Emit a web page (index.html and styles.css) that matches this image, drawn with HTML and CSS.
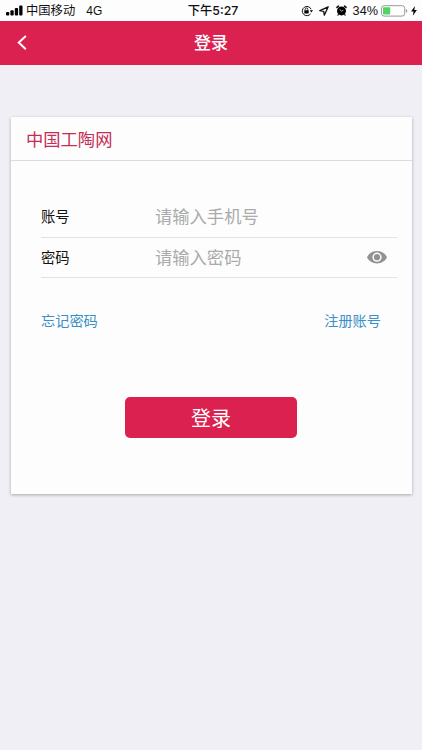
FILE: index.html
```
<!DOCTYPE html>
<html lang="zh-CN">
<head>
<meta charset="UTF-8">
<meta name="viewport" content="width=device-width, initial-scale=1.0">
<title>登录</title>
<link rel="stylesheet" href="styles.css">
</head>
<body>
<div class="status-bar">
  <div class="status-left">
    <svg class="signal" width="17" height="11" viewBox="0 0 17 11">
      <rect x="0" y="7" width="3.3" height="3.5" rx="1"/>
      <rect x="4.4" y="5.2" width="3.3" height="5.3" rx="1"/>
      <rect x="8.8" y="3" width="3.3" height="7.5" rx="1"/>
      <rect x="13.2" y="0.5" width="3.3" height="10" rx="1"/>
    </svg>
    <span class="carrier">中国移动</span>
    <span class="network">4G</span>
  </div>
  <div class="status-time">下午5:27</div>
  <div class="status-right">
    <svg class="lock" width="12" height="12" viewBox="0 0 12 12">
      <path d="M9.6 8.8A4.6 4.6 0 1 1 10.1 4.2" fill="none" stroke="#111" stroke-width="1"/>
      <path d="M8.8 5.2h3.2L10.4 7.6z"/>
      <rect x="3.3" y="5.3" width="4.4" height="3.2" rx="0.4"/>
      <path d="M4.2 5.5V4.3a1.3 1.3 0 0 1 2.6 0v1.2" fill="none" stroke="#111" stroke-width="0.9"/>
    </svg>
    <svg class="arrow" width="10" height="10" viewBox="0 0 10 10">
      <path d="M9.2 0.8L0.8 4.7l3.9 0.6 0.6 3.9z" fill="none" stroke="#111" stroke-width="1.3" stroke-linejoin="round"/>
    </svg>
    <svg class="alarm" width="11" height="11" viewBox="0 0 11 11">
      <circle cx="5.5" cy="5.9" r="4.5"/>
      <path d="M1 2.4L2.4 1.1M10 2.4L8.6 1.1" stroke="#111" stroke-width="1.6" stroke-linecap="round"/>
      <path d="M2.4 9.4L1.9 10.2M8.6 9.4l0.5 0.8" stroke="#111" stroke-width="1.1" stroke-linecap="round"/>
      <path d="M3.6 4.4L5.5 6.1L7.3 5.3" fill="none" stroke="#fff" stroke-width="0.7"/>
    </svg>
    <span class="percent">34%</span>
    <svg class="battery" width="27" height="12" viewBox="0 0 27 12">
      <rect x="0.5" y="0.7" width="23.2" height="10.4" rx="2.6" fill="#fff" stroke="#8d8d8d" stroke-width="0.9"/>
      <rect x="2" y="2.2" width="7.2" height="7.4" rx="0.8" fill="#4cd665"/>
      <path d="M24.9 4.1q1.4 0.5 1.4 1.8t-1.4 1.8z" fill="#999"/>
    </svg>
    <svg class="bolt" width="6" height="10" viewBox="0 0 6 10">
      <path d="M3.9 0L0.1 5.5H2.6L1.8 9.8L5.9 4H3.3z"/>
    </svg>
  </div>
</div>

<div class="header">
  <a class="back" href="#" aria-label="返回">
    <svg width="10" height="16" viewBox="0 0 10 16">
      <path d="M8.8 1L1.8 7.6L8.8 14.2" fill="none" stroke="#fff" stroke-width="2"/>
    </svg>
  </a>
  <h1>登录</h1>
</div>

<div class="card">
  <div class="card-title">中国工陶网</div>
  <form class="login-form">
    <div class="field">
      <label for="phone">账号</label>
      <input type="text" id="phone" placeholder="请输入手机号">
    </div>
    <div class="field">
      <label for="password">密码</label>
      <input type="password" id="password" placeholder="请输入密码">
      <svg class="eye" width="20" height="14" viewBox="0 0 20 14">
        <path d="M0 7.2C2 3.2 5.6 1 10 1s8 2.2 10 6.2c-2 4-5.6 6.2-10 6.2S2 11.2 0 7.2z" fill="#929292"/>
        <circle cx="10" cy="7.2" r="4.6" fill="#fdfdfd"/>
        <circle cx="10" cy="7.2" r="3.1" fill="#929292"/>
      </svg>
    </div>
    <div class="links">
      <a href="#">忘记密码</a>
      <a href="#">注册账号</a>
    </div>
    <button class="login-button" type="button">登录</button>
  </form>
</div>
</body>
</html>
```

FILE: styles.css
```
* {
  box-sizing: border-box;
}

body {
  margin: 0;
  height: 750px;
  overflow: hidden;
  background-color: #efeff5;
  font-family: "Liberation Sans", "Noto Sans CJK SC", sans-serif;
  color: #111;
}

.status-bar {
  display: grid;
  grid-template-columns: 1fr auto 1fr;
  align-items: center;
  height: 21px;
  padding: 0 5px 0 6px;
  background-color: #fdfdfd;
  font-size: 12px;
  line-height: 20px;
}

.status-left,
.status-right {
  display: flex;
  align-items: center;
}

.status-right {
  justify-content: flex-end;
}

.carrier {
  margin-left: 3px;
  font-size: 12.3px;
}

.network {
  margin-left: 11px;
}

.status-time {
  padding-left: 3px;
  font-family: Inter, "Noto Sans CJK SC", sans-serif;
  font-size: 12.3px;
  font-weight: 500;
}

.arrow {
  margin-left: 6px;
}

.alarm {
  margin-left: 7px;
}

.percent {
  margin-left: 6px;
  font-size: 12.7px;
}

.battery {
  margin-left: 3px;
}

.bolt {
  margin-left: 3px;
}

.header {
  display: grid;
  grid-template-columns: 40px 1fr 40px;
  align-items: center;
  height: 44px;
  background-color: #db214f;
  color: #fff;
}

.back {
  display: flex;
  padding-left: 17px;
}

.header h1 {
  margin: 0;
  padding-top: 2px;
  font-size: 17px;
  font-weight: 500;
  line-height: 24px;
  text-align: center;
}

.card {
  height: 377px;
  margin: 52px 10px 0 11px;
  background-color: #fdfdfd;
  box-shadow: 0 1px 3px rgba(0, 0, 0, 0.3);
}

.card-title {
  height: 44px;
  padding-left: 15px;
  border-bottom: 1px solid #dcdcdc;
  color: #c52d56;
  font-size: 17.3px;
  line-height: 47px;
}

.login-form {
  padding: 36px 15px 0 30px;
}

.field {
  display: flex;
  align-items: center;
  height: 40.5px;
  border-bottom: 1px solid #e2e2e2;
}

.field label {
  width: 114px;
  padding-bottom: 2px;
  font-size: 14.3px;
}

.field input {
  flex: 1;
  min-width: 0;
  padding: 2px 0 0;
  border: 0;
  outline: 0;
  background: none;
  font-family: inherit;
  font-size: 17.3px;
}

.field input::placeholder {
  color: #aaa;
}

.eye {
  margin-right: 10px;
}

.links {
  display: flex;
  justify-content: space-between;
  padding: 33px 16px 0 0;
  font-size: 14.2px;
  line-height: 21px;
}

.links a {
  color: #3a8fc6;
  text-decoration: none;
}

.login-button {
  display: block;
  width: 172px;
  height: 41px;
  margin: 65.4px 0 0 84px;
  padding: 3px 0 0;
  border: 0;
  border-radius: 5px;
  background-color: #db214f;
  color: #fff;
  font-family: inherit;
  font-size: 20px;
  line-height: 38px;
}
```
